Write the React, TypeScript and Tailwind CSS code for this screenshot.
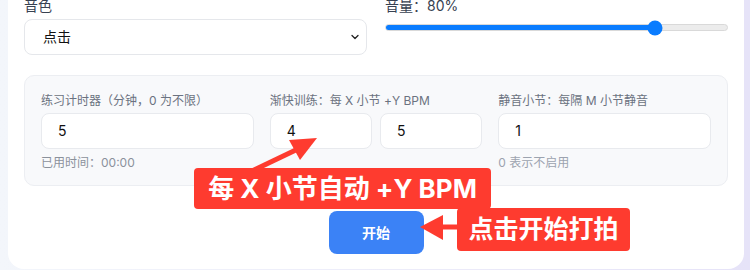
import React from "react";

const FONT = "font-['Inter','Noto_Sans_CJK_SC',sans-serif]";

function NumInput({ value }: { value: string }) {
  return (
    <div className="h-9 w-full rounded-lg border border-[#e8eaee] bg-white px-4 flex items-center text-sm text-[#111]">
      {value}
    </div>
  );
}

export default function App() {
  return (
    <div className={`relative h-[270px] w-[750px] overflow-hidden bg-gradient-to-r from-[#f3f6fb] to-[#e6e3f8] ${FONT}`}>
      <div className="ml-2 -mt-5 w-[736px] rounded-b-2xl bg-white px-4 pt-[16px] pb-[15px]">
        {/* top row */}
        <div className="grid grid-cols-2 gap-[18px]">
          <div>
            <p className="text-sm leading-5 text-[#374151]">音色</p>
            <div className="mt-[3px] flex h-9 items-center justify-between rounded-lg border border-[#e5e7eb] bg-white pl-[18px] pr-[6px] text-sm text-[#111]">
              <span>点击</span>
              <svg width="10" height="10" viewBox="0 0 10 10" fill="none">
                <path d="M2 3.5 L5 6.5 L8 3.5" stroke="#222" strokeWidth="1.3" strokeLinecap="round" strokeLinejoin="round" />
              </svg>
            </div>
          </div>
          <div>
            <p className="text-sm leading-5 text-[#374151]">音量：80%</p>
            <div className="relative mt-[8px] h-[7px] w-full rounded-full bg-[#ececec] border border-[#d9d9d9]">
              <div className="h-full w-[79%] rounded-full bg-[#0a7cff]" />
              <div className="absolute left-[79%] top-1/2 h-[15px] w-[15px] -translate-x-1/2 -translate-y-1/2 rounded-full bg-[#0a7cff]" />
            </div>
          </div>
        </div>

        {/* settings panel */}
        <div className="mt-5 rounded-[10px] border border-[#eceef2] bg-[#f8f9fb] px-4 pt-[17px] pb-[14px]">
          <div className="grid grid-cols-3 gap-4">
            <div>
              <p className="text-xs leading-4 text-[#6b7280]">练习计时器（分钟，0 为不限）</p>
              <div className="mt-[4px]">
                <NumInput value="5" />
              </div>
              <p className="mt-[6px] text-xs leading-4 text-[#8b919b]">已用时间：00:00</p>
            </div>
            <div>
              <p className="text-xs leading-4 text-[#6b7280]">渐快训练：每 X 小节 +Y BPM</p>
              <div className="mt-[4px] grid grid-cols-2 gap-2">
                <NumInput value="4" />
                <NumInput value="5" />
              </div>
            </div>
            <div>
              <p className="text-xs leading-4 text-[#6b7280]">静音小节：每隔 M 小节静音</p>
              <div className="mt-[4px]">
                <NumInput value="1" />
              </div>
              <p className="mt-[6px] text-xs leading-4 text-[#9ca3af]">0 表示不启用</p>
            </div>
          </div>
        </div>

        <div className="mt-[25px] flex justify-center">
          <button className="h-[43px] w-[95px] rounded-lg bg-[#3b82f6] text-sm font-bold text-white">开始</button>
        </div>
      </div>

      {/* annotations */}
      <svg className="absolute left-0 top-0" width="750" height="270" viewBox="0 0 750 270">
        <line x1="250" y1="172" x2="300" y2="148" stroke="#fe3b2f" strokeWidth="5" />
        <polygon points="317,138 289,140 300,160" fill="#fe3b2f" />
        <line x1="460" y1="227" x2="436" y2="227" stroke="#fe3b2f" strokeWidth="5" />
        <polygon points="420,227 443,215 443,240" fill="#fe3b2f" />
      </svg>
      <div className="absolute left-[194px] top-[168px] flex h-[41px] w-[297px] items-center justify-center rounded-[4px] bg-[#fe3b2f] text-[26px] font-bold text-white">
        每 X 小节自动 +Y BPM
      </div>
      <div className="absolute left-[457px] top-[208px] flex h-[43px] w-[173px] items-center justify-center rounded-[4px] bg-[#fe3b2f] text-[25px] font-bold text-white">
        点击开始打拍
      </div>
    </div>
  );
}
